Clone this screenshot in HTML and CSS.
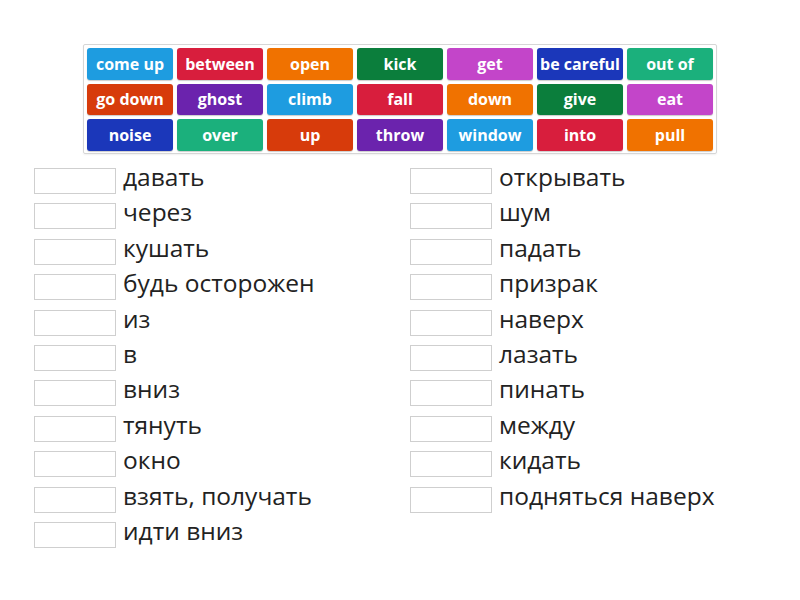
FILE: index.html
```html
<!DOCTYPE html>
<html lang="ru">
<head>
<meta charset="utf-8">
<title>Match up</title>
<link rel="stylesheet" href="styles.css">
</head>
<body>
<div class="bank">
  <div class="tile c1">come up</div>
  <div class="tile c2">between</div>
  <div class="tile c3">open</div>
  <div class="tile c4">kick</div>
  <div class="tile c5">get</div>
  <div class="tile c6">be careful</div>
  <div class="tile c7">out of</div>
  <div class="tile c8">go down</div>
  <div class="tile c9">ghost</div>
  <div class="tile c1">climb</div>
  <div class="tile c2">fall</div>
  <div class="tile c3">down</div>
  <div class="tile c4">give</div>
  <div class="tile c5">eat</div>
  <div class="tile c6">noise</div>
  <div class="tile c7">over</div>
  <div class="tile c8">up</div>
  <div class="tile c9">throw</div>
  <div class="tile c1">window</div>
  <div class="tile c2">into</div>
  <div class="tile c3">pull</div>
</div>
<div class="lists">
  <div class="col">
    <div class="row"><div class="slot"></div><div class="label">давать</div></div>
    <div class="row"><div class="slot"></div><div class="label">через</div></div>
    <div class="row"><div class="slot"></div><div class="label">кушать</div></div>
    <div class="row"><div class="slot"></div><div class="label">будь осторожен</div></div>
    <div class="row"><div class="slot"></div><div class="label">из</div></div>
    <div class="row"><div class="slot"></div><div class="label">в</div></div>
    <div class="row"><div class="slot"></div><div class="label">вниз</div></div>
    <div class="row"><div class="slot"></div><div class="label">тянуть</div></div>
    <div class="row"><div class="slot"></div><div class="label">окно</div></div>
    <div class="row"><div class="slot"></div><div class="label">взять, получать</div></div>
    <div class="row"><div class="slot"></div><div class="label">идти вниз</div></div>
  </div>
  <div class="col">
    <div class="row"><div class="slot"></div><div class="label">открывать</div></div>
    <div class="row"><div class="slot"></div><div class="label">шум</div></div>
    <div class="row"><div class="slot"></div><div class="label">падать</div></div>
    <div class="row"><div class="slot"></div><div class="label">призрак</div></div>
    <div class="row"><div class="slot"></div><div class="label">наверх</div></div>
    <div class="row"><div class="slot"></div><div class="label">лазать</div></div>
    <div class="row"><div class="slot"></div><div class="label">пинать</div></div>
    <div class="row"><div class="slot"></div><div class="label">между</div></div>
    <div class="row"><div class="slot"></div><div class="label">кидать</div></div>
    <div class="row"><div class="slot"></div><div class="label">подняться наверх</div></div>
  </div>
</div>
</body>
</html>
```
FILE: styles.css
```css
html, body {
  margin: 0;
  padding: 0;
  background: #ffffff;
}
body {
  font-family: "Open Sans", "Liberation Sans", sans-serif;
  color: #222;
  width: 800px;
  height: 600px;
  overflow: hidden;
}
.bank {
  box-sizing: border-box;
  width: 634px;
  height: 110px;
  margin: 44px 0 0 83px;
  padding: 3px;
  border: 1px solid #d6d6d6;
  border-radius: 2px;
  display: grid;
  grid-template-columns: repeat(7, 86px);
  grid-auto-rows: 31.6px;
  column-gap: 4px;
  row-gap: 4px;
  box-shadow: 0 1px 2px rgba(0,0,0,0.06);
}
.tile {
  border-radius: 3px;
  color: #fff;
  font-weight: 700;
  font-size: 16px;
  line-height: 20px;
  display: flex;
  align-items: center;
  justify-content: center;
  white-space: nowrap;
  box-shadow: 0 1px 1px rgba(0,0,0,0.2);
}
.c1 { background: #1e9ce0; }
.c2 { background: #d81e3d; }
.c3 { background: #f07200; }
.c4 { background: #0b7e3c; }
.c5 { background: #c345c9; }
.c6 { background: #1b37ba; }
.c7 { background: #1bb07c; }
.c8 { background: #d73b0b; }
.c9 { background: #6b23ad; }
.lists {
  display: flex;
  margin: 14px 0 0 34px;
}
.col {
  width: 376px;
  display: flex;
  flex-direction: column;
  gap: 9.4px;
}
.row {
  display: flex;
  align-items: flex-start;
  height: 26px;
}
.slot {
  box-sizing: border-box;
  width: 82px;
  height: 26px;
  border: 1px solid #cfcfcf;
  background: #fff;
  flex: none;
}
.label {
  margin-left: 7px;
  font-size: 24.5px;
  line-height: 18px;
  color: #222;
  white-space: nowrap;
}
```
